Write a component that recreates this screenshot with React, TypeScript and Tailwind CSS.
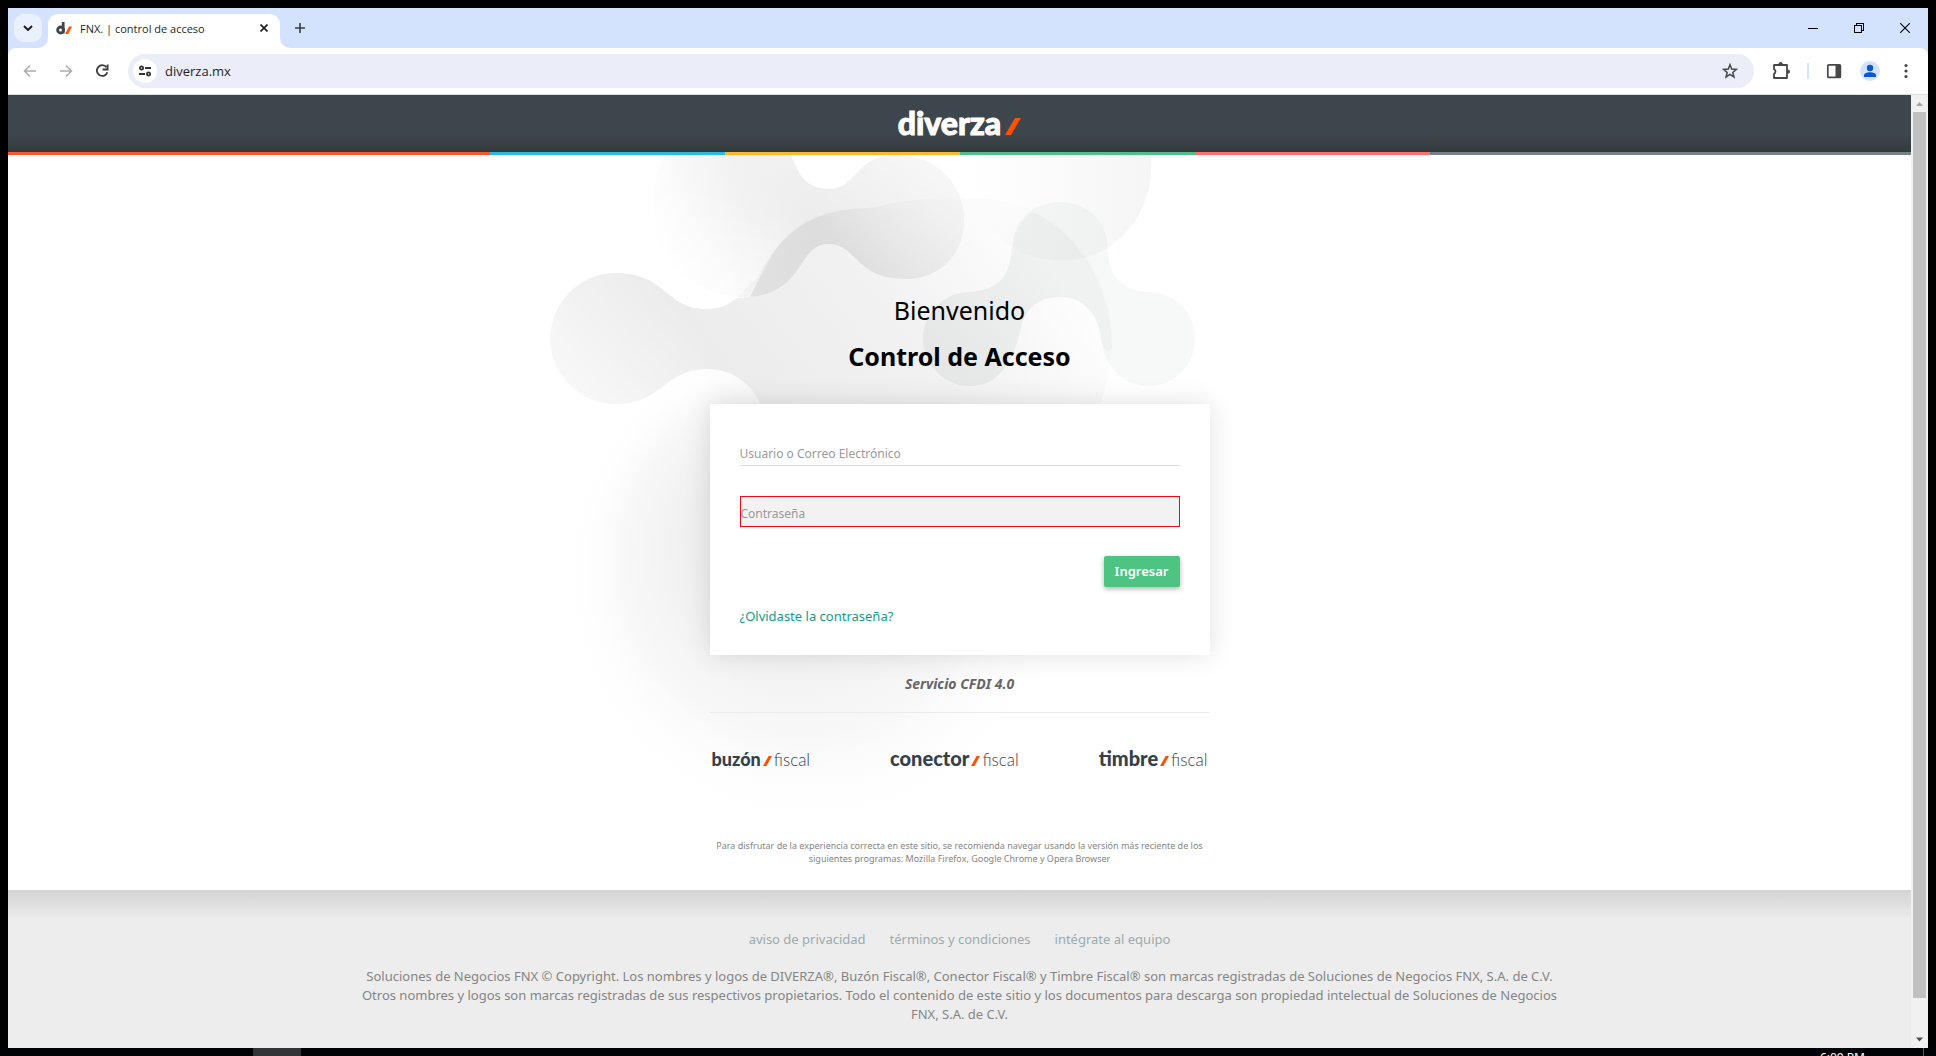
import React from "react";

const ORANGE = "#ff4f00";

function Slash({ className }: { className: string }) {
  return (
    <svg viewBox="0 0 16 17" preserveAspectRatio="none" className={className} fill={ORANGE} aria-hidden="true">
      <path d="M10 0h6L6 17H0z" />
    </svg>
  );
}

function TabStrip() {
  return (
    <div className="flex h-10 shrink-0 items-end bg-[#d3e3fd]">
      <div className="flex h-full items-center px-1.5">
        <button aria-label="Buscar pestañas" className="flex size-7 items-center justify-center rounded-[10px] bg-[#e9f1fe]">
          <svg viewBox="0 0 10 6" className="w-2.5" fill="none" stroke="#1f1f1f" strokeWidth="2">
            <path d="M1 1l4 4 4-4" />
          </svg>
        </button>
      </div>
      <div className="relative flex h-[34px] w-58 items-center rounded-t-[10px] bg-white pr-2 pl-2">
        <svg viewBox="0 0 10 10" className="absolute bottom-0 -left-2.5 size-2.5" fill="#fff"><path d="M10 0v10H0A10 10 0 0 0 10 0" /></svg>
        <svg viewBox="0 0 10 10" className="absolute -right-2.5 bottom-0 size-2.5" fill="#fff"><path d="M0 0v10h10A10 10 0 0 1 0 0" /></svg>
        <svg viewBox="0 0 16 14" className="mb-1.5 h-3.5 w-4" aria-hidden="true">
          <path d="M7.200 1v11.500" stroke="#3d464d" strokeWidth="2.800" />
          <circle cx="4.600" cy="9" r="3" fill="none" stroke="#3d464d" strokeWidth="2.800" />
          <path d="M13 5.500h3L12.200 13H9.200z" fill={ORANGE} />
        </svg>
        <span className="mb-1 ml-2 flex-1 font-['Open_Sans',sans-serif] text-[11px] whitespace-nowrap text-[#1f1f1f]">FNX. | control de acceso</span>
        <button aria-label="Cerrar pestaña" className="mb-1.5 flex size-4 items-center justify-center">
          <svg viewBox="0 0 8 8" className="size-2" stroke="#1f1f1f" strokeWidth="1.7"><path d="M.5.5l7 7m0-7l-7 7" /></svg>
        </button>
      </div>
      <button aria-label="Nueva pestaña" className="mb-3 ml-3 flex size-4 items-center justify-center">
        <svg viewBox="0 0 10 10" className="size-2.5" stroke="#3c3c3c" strokeWidth="1.6"><path d="M5 0v10M0 5h10" /></svg>
      </button>
      <div className="flex-1" />
      <div className="flex h-full items-center">
        <button aria-label="Minimizar" className="flex w-[46px] justify-center">
          <svg viewBox="0 0 10 10" className="size-2.5" stroke="#000" shapeRendering="crispEdges"><path d="M0 5.5h10" /></svg>
        </button>
        <button aria-label="Restaurar" className="flex w-[46px] justify-center">
          <svg viewBox="0 0 10 10" className="size-2.5" stroke="#000" fill="none" shapeRendering="crispEdges"><path d="M.5 2.5h7v7h-7zM2.5 2V.5h7v7H8" /></svg>
        </button>
        <button aria-label="Cerrar" className="flex w-[46px] justify-center">
          <svg viewBox="0 0 10 10" className="size-2.5" stroke="#000" strokeWidth="1.1"><path d="M0 0l10 10M10 0L0 10" /></svg>
        </button>
      </div>
    </div>
  );
}

function Toolbar() {
  return (
    <div className="bg-[#d3e3fd]">
      <div className="flex h-[47px] items-center rounded-t-lg border-b border-[#d9e0e0] bg-white pr-3 pl-3.5">
        <button aria-label="Atrás" className="flex size-4 items-center justify-center">
          <svg viewBox="0 0 14 14" className="size-3.5" fill="none" stroke="#adadad" strokeWidth="1.6"><path d="M13 7H2M7 1.5L1.5 7 7 12.5" /></svg>
        </button>
        <button aria-label="Adelante" className="ml-5 flex size-4 items-center justify-center">
          <svg viewBox="0 0 14 14" className="size-3.5" fill="none" stroke="#adadad" strokeWidth="1.6"><path d="M1 7h11M7 1.5L12.500 7 7 12.5" /></svg>
        </button>
        <button aria-label="Recargar" className="ml-5 flex size-4 items-center justify-center">
          <svg viewBox="0 0 14 14" className="size-3.5" fill="none" stroke="#3c3c3c" strokeWidth="1.8"><path d="M11.500 3.200A5.400 5.400 0 1 0 12.400 8.200M12.600 .5v5H7.600" /></svg>
        </button>
        <div className="ml-[18px] flex h-[34px] flex-1 items-center rounded-full bg-[#ebeef8] pr-4 pl-[5px]">
          <button aria-label="Información del sitio" className="flex size-6 items-center justify-center rounded-full bg-white">
            <svg viewBox="0 0 14 12" className="w-3.5" fill="none" stroke="#333" strokeWidth="1.800"><circle cx="3.500" cy="3" r="1.600" /><path d="M7 3H13M1 9h6" /><circle cx="10.500" cy="9" r="1.600" /></svg>
          </button>
          <input aria-label="Dirección" defaultValue="diverza.mx" className="ml-2 min-w-0 flex-1 bg-transparent font-['Open_Sans',sans-serif] text-[13px] leading-5 text-[#1f1f1f] outline-none" />
          <button aria-label="Añadir a favoritos">
            <svg viewBox="0 0 16 16" className="size-4" fill="none" stroke="#474747" strokeWidth="1.500"><path d="M8 1.700l1.700 4.400 4.700.3-3.600 3 1.200 4.600L8 11.400 4 14l1.200-4.600-3.600-3 4.700-.3z" /></svg>
          </button>
        </div>
        <button aria-label="Extensiones" className="ml-[18px]">
          <svg viewBox="0 0 18 18" className="size-[18px]" fill="none" stroke="#474747" strokeWidth="1.800" strokeLinejoin="round"><path d="M2 3h13v13H2v-4q3-2.500 0-5z" /><path d="M7 2a1.600 1.600 0 0 1 3.200 0zM16 8a1.600 1.600 0 0 1 0 3.200z" fill="#474747" strokeWidth="1" /></svg>
        </button>
        <span className="mx-[17px] h-4 w-0.5 bg-[#d3e3fd]" />
        <button aria-label="Panel lateral">
          <svg viewBox="0 0 16 16" className="size-4"><rect x="1.800" y="1.800" width="12.600" height="12.600" rx="1" fill="none" stroke="#474747" strokeWidth="1.700" /><path d="M9.500 2h5v12h-5z" fill="#474747" /></svg>
        </button>
        <button aria-label="Perfil" className="ml-[18px] size-5 rounded-full bg-[#d3e3fd]">
          <svg viewBox="0 0 20 20" className="size-5" fill="#0b57d0"><circle cx="10" cy="7" r="3.200" /><path d="M4 16v-1.500C4 12.500 7 11.300 10 11.300s6 1.200 6 3.200V16z" /></svg>
        </button>
        <button aria-label="Menú" className="ml-4">
          <svg viewBox="0 0 20 16" className="h-4 w-5" fill="#474747"><circle cx="10" cy="2.500" r="1.600" /><circle cx="10" cy="8" r="1.600" /><circle cx="10" cy="13.500" r="1.600" /></svg>
        </button>
      </div>
    </div>
  );
}

function Backdrop() {
  return (
    <svg viewBox="500 155 760 736" className="absolute top-0 left-1/2 h-[736px] w-[760px] -translate-x-[460px]" aria-hidden="true">
      <defs>
        <radialGradient id="bg-soft" gradientUnits="userSpaceOnUse" cx="815" cy="580" r="255" fx="770" fy="510">
          <stop offset="0" stopColor="#e6e6e6" />
          <stop offset=".35" stopColor="#efefef" />
          <stop offset=".7" stopColor="#f8f8f8" />
          <stop offset="1" stopColor="#fff" stopOpacity="0" />
        </radialGradient>
        <linearGradient id="bg-main" gradientUnits="userSpaceOnUse" x1="740" y1="400" x2="1000" y2="200">
          <stop offset="0" stopColor="#ececec" />
          <stop offset=".5" stopColor="#f1f1f1" />
          <stop offset="1" stopColor="#fdfdfd" />
        </linearGradient>
        <linearGradient id="bg-left" gradientUnits="userSpaceOnUse" x1="570" y1="410" x2="680" y2="310">
          <stop offset="0" stopColor="#fff" stopOpacity=".7" />
          <stop offset="1" stopColor="#fff" stopOpacity="0" />
        </linearGradient>
        <linearGradient id="bg-top" gradientUnits="userSpaceOnUse" x1="650" y1="240" x2="820" y2="200">
          <stop offset="0" stopColor="#888" stopOpacity="0" />
          <stop offset=".5" stopColor="#888" stopOpacity=".1" />
          <stop offset="1" stopColor="#888" stopOpacity=".16" />
        </linearGradient>
        <linearGradient id="bg-lobe" gradientUnits="userSpaceOnUse" x1="945" y1="165" x2="870" y2="265">
          <stop offset="0" stopColor="#fff" stopOpacity=".6" />
          <stop offset="1" stopColor="#fff" stopOpacity="0" />
        </linearGradient>
        <linearGradient id="bg-swoosh" gradientUnits="userSpaceOnUse" x1="750" y1="0" x2="900" y2="0">
          <stop offset="0" stopColor="#888" stopOpacity=".03" />
          <stop offset=".45" stopColor="#888" stopOpacity=".05" />
          <stop offset="1" stopColor="#888" stopOpacity="0" />
        </linearGradient>
        <linearGradient id="bg-fade" gradientUnits="userSpaceOnUse" x1="700" y1="300" x2="740" y2="200">
          <stop offset="0" stopColor="#fff" stopOpacity=".75" />
          <stop offset="1" stopColor="#fff" stopOpacity="0" />
        </linearGradient>
        <linearGradient id="bg-right" gradientUnits="userSpaceOnUse" x1="970" y1="0" x2="1152" y2="0">
          <stop offset="0" stopColor="#888" stopOpacity="0" />
          <stop offset="1" stopColor="#888" stopOpacity=".08" />
        </linearGradient>
      </defs>
      <circle cx="815" cy="580" r="255" fill="url(#bg-soft)" />
      <path d="M616 273c50 0 50 36 90 36 30 0 38-22 50-30 22-40 50-71 114-71 35-8 70-12 105-10 82 2 137 65 137 142q0 35-14 70H763c-8-22-26-41-57-41-40 0-45 35-90 35a65 65 0 0 1 0-131z" fill="url(#bg-main)" />
      <path d="M616 273c50 0 50 36 90 36v60c-40 0-45 35-90 35a65 65 0 0 1 0-131z" fill="url(#bg-left)" />
      <path d="M653 207q0-30 12-52h126c8 20 15 34 39 34s28-31 57-33c50-5 77 30 77 64 0 35-25 59-58 59-52 0-48-35-78-35-31 0-22 48-78 53-55 3-98-40-97-90z" fill="url(#bg-top)" />
      <path d="M653 207q0-30 12-52h126c8 20 15 34 39 34s28-31 57-33c50-5 77 30 77 64 0 35-25 59-58 59-52 0-48-35-78-35-31 0-22 48-78 53-55 3-98-40-97-90z" fill="url(#bg-lobe)" />
      <path d="M653 207q0-30 12-52h126c8 20 15 34 39 34v20c-45 12-58 45-80 88-60 10-97-40-97-90z" fill="url(#bg-fade)" />
      <path d="M750 297c25-45 35-89 120-89 30 0 70 8 94 12 0 35-25 59-58 59-52 0-48-35-78-35-31 0-22 48-78 53z" fill="url(#bg-swoosh)" />
      <path d="M960 155h191q2 30-8 51c-15 35-48 55-81 55-50 0-92-35-102-106z" fill="url(#bg-right)" />
      <path d="M1060 202c30 0 48 22 48 48 0 28 18 42 41 42a46 47 0 0 1 0 94c-30 0-45-25-48-46-3-28-18-43-41-43-25 0-35 15-39 30-6 30-20 59-51 59a47 47 0 0 1 0-94c28-2 39-15 42-42 0-26 18-48 48-48z" fill="#667070" fillOpacity=".05" />
      <path d="M1034 212c50 26 78 80 78 136-4 4-8 4-10-8-4-28-20-43-42-43-25 0-35 15-39 30-6 30-20 59-51 59a47 47 0 0 1 0-94c28-2 39-15 42-42 1-16 9-30 22-38z" fill="#666" fillOpacity=".03" />
    </svg>
  );
}

const products = [
  { name: "buzón", label: "Buzón Fiscal", size: "text-lg" },
  { name: "conector", label: "Conector Fiscal", size: "text-xl" },
  { name: "timbre", label: "Timbre Fiscal", size: "text-xl" },
];

function Login() {
  return (
    <main className="relative overflow-hidden bg-white pt-[118px] pb-[25px]">
      <Backdrop />
      <div className="relative mx-auto w-full max-w-[500px]">
        <div className="pt-[14px] pb-[25px] text-center text-[25px] leading-[46px] text-black">
          <h1>Bienvenido</h1>
          <h2 className="font-bold">Control de Acceso</h2>
        </div>
        <form className="bg-white px-[30px] pt-[37px] pb-[29px] shadow-[0_0_26px_rgba(0,0,0,0.12)]" onSubmit={(e) => e.preventDefault()}>
          <input aria-label="Usuario o Correo Electrónico" placeholder="Usuario o Correo Electrónico" className="block h-[25px] w-full border-b border-[#dcdcdc] text-xs text-gray-700 outline-none placeholder:text-[#9a9a9a]" />
          <input type="password" aria-label="Contraseña" placeholder="Contraseña" className="mt-[30px] block h-[31px] w-full border border-[#ee0a14] bg-[#f2f2f2] pt-1 text-xs text-gray-700 outline-none placeholder:text-[#9a9a9a]" />
          <div className="mt-[29px] flex justify-end">
            <button className="h-[31px] rounded-xs bg-[#4dc481] px-[11px] text-[13px] font-semibold text-white shadow-[0_2px_5px_rgba(0,0,0,0.3)]">Ingresar</button>
          </div>
          <a href="#recuperar" className="mt-[19px] block w-fit text-[13px] leading-5 text-[#0f9d8a]">¿Olvidaste la contraseña?</a>
        </form>
        <p className="pt-[19px] text-center text-sm leading-5 font-bold text-[#666] italic">Servicio CFDI 4.0</p>
        <hr className="mt-[18px] border-[#ececec]" />
        <div className="mt-[31px] flex items-center justify-between px-0.5 font-['Lato',sans-serif] leading-7 text-[#33414d]">
          {products.map((p) => (
            <a key={p.name} href="#producto" aria-label={p.label} className="flex items-baseline">
              <span className={`${p.size} leading-7 font-black`}>{p.name}</span>
              <Slash className="ml-0.5 h-2.5 w-[9px]" />
              <span className="ml-0.5 text-[17px] font-light">fiscal</span>
            </a>
          ))}
        </div>
        <p className="mt-[65px] text-center text-[9px] leading-[13px] text-[#858585]">
          Para disfrutar de la experiencia correcta en este sitio, se recomienda navegar usando la versión más reciente de los siguientes programas: Mozilla Firefox, Google Chrome y Opera Browser
        </p>
      </div>
    </main>
  );
}

function Scrollbar() {
  return (
    <div className="flex w-[17px] shrink-0 flex-col items-center bg-[#f1f1f1]" aria-hidden="true">
      <svg viewBox="0 0 17 17" className="size-[17px]" fill="#a3a3a3"><path d="M5 11h7L8.500 7z" /></svg>
      <div className="w-[13px] flex-1 bg-[#c1c1c1]" />
      <div className="h-[33px]" />
      <svg viewBox="0 0 17 17" className="size-[17px]" fill="#505050"><path d="M5 6.500h7l-3.500 4z" /></svg>
    </div>
  );
}

export default function App() {
  return (
    <div className="flex h-screen flex-col overflow-hidden bg-[#000207] font-['Noto_Sans',sans-serif]">
      <div className="flex min-h-0 flex-1 flex-col border-8 border-b-0 border-black">
        <TabStrip />
        <Toolbar />
        <div className="flex min-h-0 flex-1">
          <div className="min-w-0 flex-1 overflow-hidden bg-[#ededed]">
            <header className="flex h-[57px] items-center justify-center bg-linear-to-b from-[#3e464d] from-70% to-[#333a3c]">
              <a href="#inicio" aria-label="diverza" className="mb-0.5 flex items-baseline font-['Lato',sans-serif] text-[32px] leading-8 font-black text-white [-webkit-text-stroke:1px_#fff]">
                diverza
                <Slash className="ml-1 h-[17px] w-4" />
              </a>
            </header>
            <div className="flex h-[3px]">
              <div className="flex-1 bg-[#ff5630]" />
              <div className="w-[235px] bg-[#2cbbdf]" />
              <div className="w-[235px] bg-[#ffb732]" />
              <div className="w-[235px] bg-[#51bf8a]" />
              <div className="w-[235px] bg-[#ff7070]" />
              <div className="flex-1 bg-[#788187]" />
            </div>
            <Login />
            <footer className="bg-[#ededed] bg-linear-to-b from-[#d3d3d3] to-[#ededed] to-[30px] px-6 pt-10 text-center text-[13px] leading-[19px] text-[#858585]">
              <nav className="flex justify-center gap-6 text-[#9aabae]">
                <a href="#privacidad">aviso de privacidad</a>
                <a href="#terminos">términos y condiciones</a>
                <a href="#equipo">intégrate al equipo</a>
              </nav>
              <p className="mx-auto mt-[18px] max-w-[1200px]">
                Soluciones de Negocios FNX © Copyright. Los nombres y logos de DIVERZA®, Buzón Fiscal®, Conector Fiscal® y Timbre Fiscal® son marcas registradas de Soluciones de Negocios FNX, S.A. de C.V. Otros nombres y logos son marcas registradas de sus respectivos propietarios. Todo el contenido de este sitio y los documentos para descarga son propiedad intelectual de Soluciones de Negocios FNX, S.A. de C.V.
              </p>
            </footer>
          </div>
          <Scrollbar />
        </div>
      </div>
      <div className="flex h-2 shrink-0 overflow-hidden">
        <div className="ml-[253px] w-12 bg-[#333438]" />
        <div className="flex-1" />
        <span className="mr-[58px] pt-1 text-xs leading-3 text-white">6:09 PM</span>
        <span className="mr-3 w-px bg-[#55585c]" />
      </div>
    </div>
  );
}
